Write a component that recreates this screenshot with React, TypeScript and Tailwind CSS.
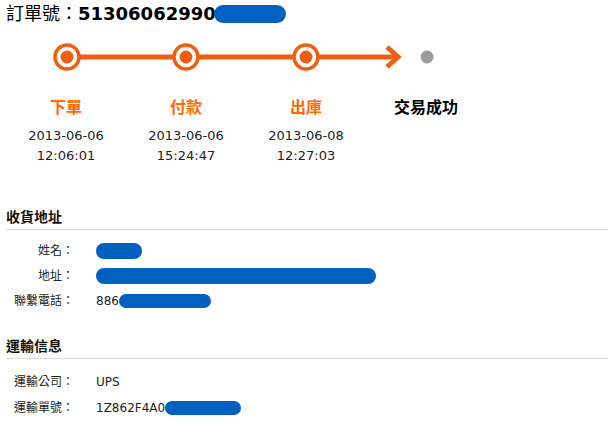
import React from 'react';

const cjk = { fontFamily: '"DejaVu Sans", "Noto Sans CJK TC", sans-serif' };

const Blob: React.FC<{ w: number; h?: number; className?: string }> = ({ w, h = 14, className = '' }) => (
  <span
    className={`inline-block rounded-full bg-[#0060c0] align-middle ${className}`}
    style={{ width: w, height: h }}
  />
);

const steps = [
  { label: '下單', date: '2013-06-06', time: '12:06:01', done: true },
  { label: '付款', date: '2013-06-06', time: '15:24:47', done: true },
  { label: '出庫', date: '2013-06-08', time: '12:27:03', done: true },
  { label: '交易成功', date: '', time: '', done: false },
];

const Ring: React.FC<{ cx: number }> = ({ cx }) => (
  <g>
    <circle cx={cx} cy={16} r={12} fill="#fff" stroke="#ee5f12" strokeWidth={3.5} />
    <circle cx={cx} cy={16} r={6.5} fill="#ee5f12" />
  </g>
);

const Row: React.FC<{ label: string; tall?: boolean; children: React.ReactNode }> = ({ label, tall, children }) => (
  <div className={`flex items-center text-[12px] text-[#222] ${tall ? 'h-[26px]' : 'h-[25px]'}`}>
    <div className="w-[78px] pr-[4px] text-right">{label}</div>
    <div className="pl-[18px] flex items-center">{children}</div>
  </div>
);

const Section: React.FC<{ title: string; pad: string; children: React.ReactNode }> = ({ title, pad, children }) => (
  <div>
    <div className="ml-[6px] border-b border-[#dddddd] pb-[1px] text-[14px] font-bold text-[#111]">{title}</div>
    <div className={pad}>{children}</div>
  </div>
);

export default function App() {
  return (
    <div className="w-[608px] h-[436px] bg-white overflow-hidden" style={cjk}>
      <div className="flex items-center pl-[6px] pt-[3px] h-[24px] text-[18px] text-black">
        <span>訂單號：</span>
        <span className="font-bold">51306062990</span>
        <Blob w={72} h={18} className="-ml-[2px]" />
      </div>

      <svg width={608} height={32} className="mt-[17px] block">
        <line x1={67} y1={16} x2={396} y2={16} stroke="#ee5f12" strokeWidth={5} />
        <polyline points="387,6 398,16 387,26" fill="none" stroke="#ee5f12" strokeWidth={5} />
        <Ring cx={67} />
        <Ring cx={186} />
        <Ring cx={306} />
        <circle cx={427} cy={16} r={6.5} fill="#9c9c9c" />
      </svg>

      <div className="flex pl-[6px] mt-[25px]">
        {steps.map((s, i) => (
          <div key={i} className="w-[120px] flex flex-col items-center">
            <div className={`text-[16px] font-bold leading-[20px] ${s.done ? 'text-[#ff6a00]' : 'text-black'}`}>{s.label}</div>
            <div className="mt-[8px] text-[13px] leading-[20px] text-[#222] text-center">
              <div>{s.date}</div>
              <div>{s.time}</div>
            </div>
          </div>
        ))}
      </div>

      <div className="mt-[41px]">
        <Section title="收貨地址" pad="pt-[8px]">
          <Row label="姓名：">
            <Blob w={46} h={16} />
          </Row>
          <Row label="地址：">
            <Blob w={280} h={16} />
          </Row>
          <Row label="聯繫電話：">
            <span>886</span>
            <Blob w={92} h={14} />
          </Row>
        </Section>
      </div>

      <div className="mt-[23px]">
        <Section title="運輸信息" pad="pt-[10px]">
          <Row label="運輸公司：" tall>
            <span>UPS</span>
          </Row>
          <Row label="運輸單號：" tall>
            <span>1Z862F4A0</span>
            <Blob w={76} h={14} />
          </Row>
        </Section>
      </div>
    </div>
  );
}
